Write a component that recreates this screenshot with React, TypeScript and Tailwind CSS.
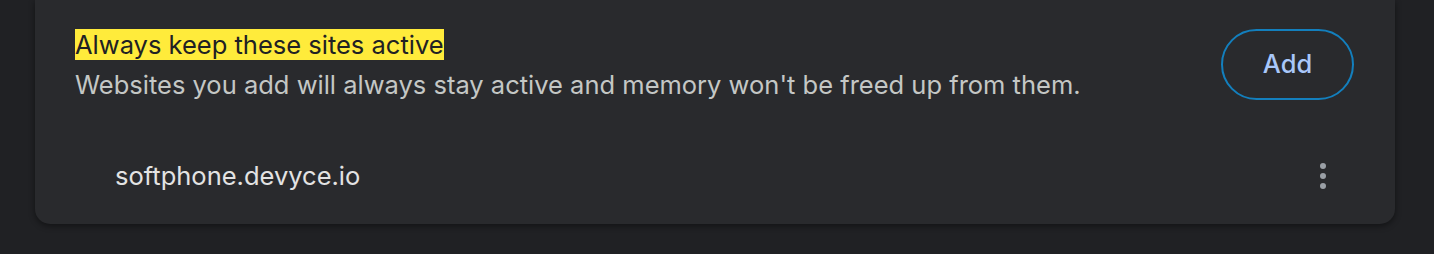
export default function App() {
  return (
    <main
      className="h-[254px] w-full overflow-hidden bg-[#202124]"
      style={{ fontFamily: 'Inter, "Noto Sans", sans-serif' }}
    >
      <section className="ml-[35px] w-[1360px] rounded-b-[15px] bg-[#292a2d] shadow-[0_2px_6px_rgba(0,0,0,0.45)]">
        <div className="flex items-center justify-between pl-[40px] pr-[41px] pt-[29px]">
          <div>
            <div className="text-[25.5px] leading-[30px] text-[#202124]">
              <span className="bg-[#ffeb3b]">Always keep these sites active</span>
            </div>
            <div className="mt-[10px] text-[25.5px] leading-[30px] text-[#c4c7c5]">
              Websites you add will always stay active and memory won't be freed up from them.
            </div>
          </div>
          <button className="h-[71px] w-[133px] rounded-full border-2 border-[#137fbd] text-[25.5px] font-medium text-[#a8c7fa]">
            Add
          </button>
        </div>

        <div className="mt-[28px] flex h-[96px] items-center justify-between pl-[80px] pr-[52px]">
          <span className="text-[25.5px] leading-[30px] text-[#e3e3e3]">softphone.devyce.io</span>
          <button className="flex h-10 w-10 flex-col items-center justify-center gap-[4px]">
            <span className="h-[6px] w-[6px] rounded-full bg-[#9aa0a6]" />
            <span className="h-[6px] w-[6px] rounded-full bg-[#9aa0a6]" />
            <span className="h-[6px] w-[6px] rounded-full bg-[#9aa0a6]" />
          </button>
        </div>
      </section>
    </main>
  )
}
